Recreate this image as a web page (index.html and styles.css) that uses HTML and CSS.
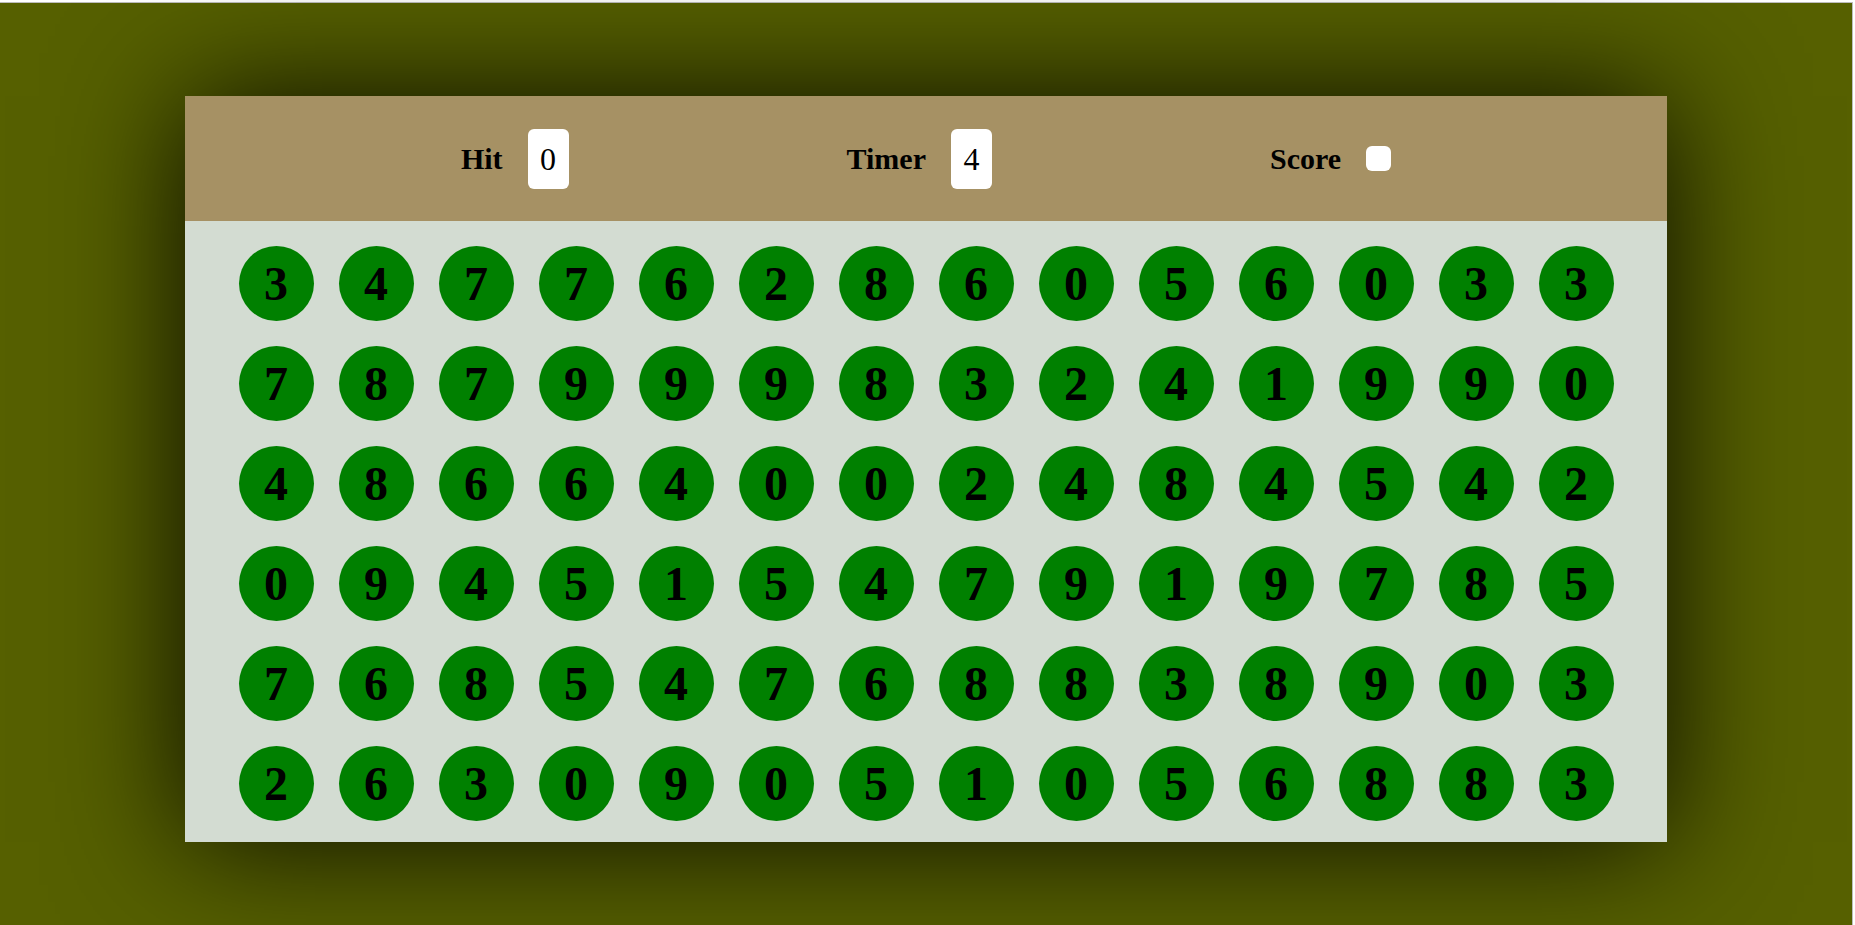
FILE: index.html
```html
<!DOCTYPE html>
<html>
<head>
<meta charset="utf-8">
<title>Bubble Game</title>
<link rel="stylesheet" href="styles.css">
</head>
<body>
<div class="stage">
  <div class="panel">
    <div class="topbar">
      <div class="stat"><span class="label">Hit</span><span class="box">0</span></div>
      <div class="stat"><span class="label">Timer</span><span class="box">4</span></div>
      <div class="stat"><span class="label">Score</span><span class="box"></span></div>
    </div>
    <div class="bubbles">
      <div class="bubble">3</div><div class="bubble">4</div><div class="bubble">7</div><div class="bubble">7</div><div class="bubble">6</div><div class="bubble">2</div><div class="bubble">8</div><div class="bubble">6</div><div class="bubble">0</div><div class="bubble">5</div><div class="bubble">6</div><div class="bubble">0</div><div class="bubble">3</div><div class="bubble">3</div>
      <div class="bubble">7</div><div class="bubble">8</div><div class="bubble">7</div><div class="bubble">9</div><div class="bubble">9</div><div class="bubble">9</div><div class="bubble">8</div><div class="bubble">3</div><div class="bubble">2</div><div class="bubble">4</div><div class="bubble">1</div><div class="bubble">9</div><div class="bubble">9</div><div class="bubble">0</div>
      <div class="bubble">4</div><div class="bubble">8</div><div class="bubble">6</div><div class="bubble">6</div><div class="bubble">4</div><div class="bubble">0</div><div class="bubble">0</div><div class="bubble">2</div><div class="bubble">4</div><div class="bubble">8</div><div class="bubble">4</div><div class="bubble">5</div><div class="bubble">4</div><div class="bubble">2</div>
      <div class="bubble">0</div><div class="bubble">9</div><div class="bubble">4</div><div class="bubble">5</div><div class="bubble">1</div><div class="bubble">5</div><div class="bubble">4</div><div class="bubble">7</div><div class="bubble">9</div><div class="bubble">1</div><div class="bubble">9</div><div class="bubble">7</div><div class="bubble">8</div><div class="bubble">5</div>
      <div class="bubble">7</div><div class="bubble">6</div><div class="bubble">8</div><div class="bubble">5</div><div class="bubble">4</div><div class="bubble">7</div><div class="bubble">6</div><div class="bubble">8</div><div class="bubble">8</div><div class="bubble">3</div><div class="bubble">8</div><div class="bubble">9</div><div class="bubble">0</div><div class="bubble">3</div>
      <div class="bubble">2</div><div class="bubble">6</div><div class="bubble">3</div><div class="bubble">0</div><div class="bubble">9</div><div class="bubble">0</div><div class="bubble">5</div><div class="bubble">1</div><div class="bubble">0</div><div class="bubble">5</div><div class="bubble">6</div><div class="bubble">8</div><div class="bubble">8</div><div class="bubble">3</div>
    </div>
  </div>
</div>
</body>
</html>
```

FILE: styles.css
```css
* { box-sizing: border-box; }
html, body { margin: 0; padding: 0; height: 100%; }
body {
  background: #ffffff;
  font-family: "Liberation Serif", "Times New Roman", serif;
  overflow: hidden;
}
.stage {
  margin: 2px 2px 0 0;
  height: calc(100% - 2px);
  border-top: 1px solid #bdbdbd;
  border-right: 1px solid #bdbdbd;
  background: #566000;
  padding-top: 93px;
  display: flex;
  justify-content: center;
  align-items: flex-start;
}
.panel {
  width: 1482px;
  box-shadow: 0 0 120px rgba(0, 0, 0, 0.9);
}
.topbar {
  height: 125px;
  background: #a69164;
  display: flex;
  justify-content: center;
  align-items: center;
  gap: 278px;
}
.stat {
  display: flex;
  align-items: center;
  gap: 25px;
}
.label {
  font-size: 30px;
  font-weight: bold;
  color: #000;
}
.box {
  display: inline-block;
  background: #fff;
  border-radius: 6px;
  padding: 12px 12.5px;
  font-size: 32px;
  line-height: 36px;
  color: #000;
}
.box:empty {
  padding: 12.5px;
}
.bubbles {
  background: #d3dcd2;
  display: grid;
  grid-template-columns: repeat(14, 75px);
  grid-auto-rows: 75px;
  gap: 25px;
  justify-content: center;
  padding: 25px 0 21px;
}
.bubble {
  width: 75px;
  height: 75px;
  border-radius: 50%;
  background: #008000;
  display: flex;
  align-items: center;
  justify-content: center;
  font-size: 48px;
  font-weight: bold;
  color: #000;
}
```
